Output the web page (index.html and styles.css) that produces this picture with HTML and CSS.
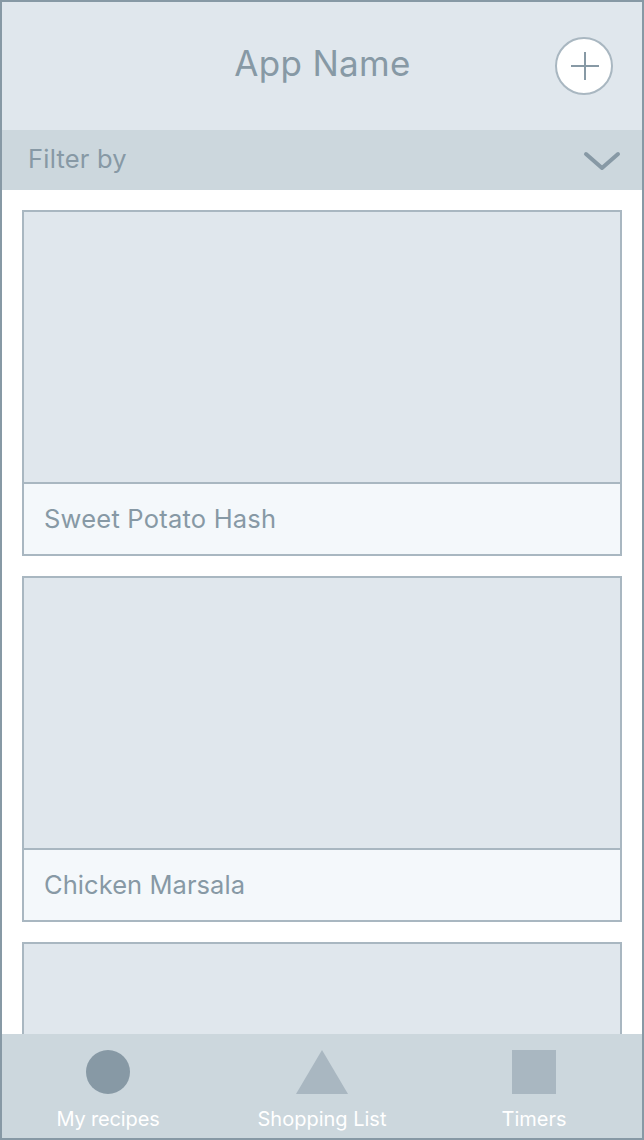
FILE: index.html
```html
<!DOCTYPE html>
<html lang="en">
<head>
<meta charset="utf-8">
<title>App Name</title>
<link rel="stylesheet" href="styles.css">
</head>
<body>
<div class="app">
  <header class="header">
    <span></span>
    <h1 class="title">App Name</h1>
    <button class="add" aria-label="Add recipe">
      <svg width="30" height="30" viewBox="0 0 30 30"><path d="M16 1v28M2 15h28"/></svg>
    </button>
  </header>
  <div class="filter">
    <span class="filter-label">Filter by</span>
    <svg class="chevron" width="38" height="22" viewBox="0 0 38 22"><path d="M3 3L19 17L35 3"/></svg>
  </div>
  <main class="list">
    <article class="card"><div class="photo"></div><h2 class="name name-hash">Sweet Potato Hash</h2></article>
    <article class="card"><div class="photo"></div><h2 class="name name-marsala">Chicken Marsala</h2></article>
    <article class="card"><div class="photo"></div></article>
  </main>
  <nav class="tabs">
    <a class="tab active"><svg class="icon" width="52" height="44" viewBox="0 0 52 44"><circle cx="26" cy="22" r="22"/></svg><span>My recipes</span></a>
    <a class="tab"><svg class="icon" width="52" height="44" viewBox="0 0 52 44"><path d="M26 0L52 44H0Z"/></svg><span>Shopping List</span></a>
    <a class="tab"><svg class="icon" width="52" height="44" viewBox="0 0 52 44"><path d="M4 0h44v44H4z"/></svg><span>Timers</span></a>
  </nav>
</div>
</body>
</html>
```
FILE: styles.css
```css
* { box-sizing: border-box; }
body { margin: 0; font-family: Inter, sans-serif; color: #8799a5; background: #fff; }
.app { width: 644px; height: 1140px; border: 2px solid #8799a5; display: flex; flex-direction: column; overflow: hidden; }
.header { flex: none; height: 128px; padding: 0 29px; background: #e0e7ed; display: grid; grid-template-columns: 58px 1fr 58px; align-items: center; }
.title { margin: 0; padding: 0 0 6px 1px; font-size: 35px; line-height: 42px; font-weight: 400; text-align: center; letter-spacing: .3px; }
.add { width: 58px; height: 58px; padding: 0; border: 2px solid #a9b7c1; border-radius: 50%; background: #fff; display: flex; align-items: center; justify-content: center; }
.add path { stroke: #8799a5; stroke-width: 2; }
.filter { flex: none; height: 60px; padding: 0 21px 0 26px; background: #ccd7dd; display: flex; align-items: center; justify-content: space-between; }
.filter-label { font-size: 25.5px; line-height: 30px; padding-bottom: 2px; letter-spacing: .2px; }
.chevron { margin-top: 4px; }
.chevron path { fill: none; stroke: #8799a5; stroke-width: 4; stroke-linecap: round; stroke-linejoin: round; }
.list { flex: 1; min-height: 0; overflow: hidden; padding: 20px; display: flex; flex-direction: column; gap: 20px; }
.card { flex: none; height: 346px; border: 2px solid #a9b7c1; background: #f4f8fb; }
.photo { height: 272px; background: #e0e7ed; border-bottom: 2px solid #a9b7c1; }
.name { margin: 0; padding-left: 20px; font-size: 25.5px; line-height: 70px; font-weight: 400; }
.name-hash { letter-spacing: .22px; }
.name-marsala { letter-spacing: .06px; }
.tabs { flex: none; height: 104px; padding: 16px 0 0; background: #ccd7dd; display: grid; grid-template-columns: 212px 216px 208px; }
.tab { display: flex; flex-direction: column; align-items: center; color: #fff; font-size: 20px; line-height: 24px; gap: 13px; }
.active { letter-spacing: -.15px; }
.icon { flex: none; fill: #a9b7c1; }
.active .icon { fill: #8799a5; }
```
